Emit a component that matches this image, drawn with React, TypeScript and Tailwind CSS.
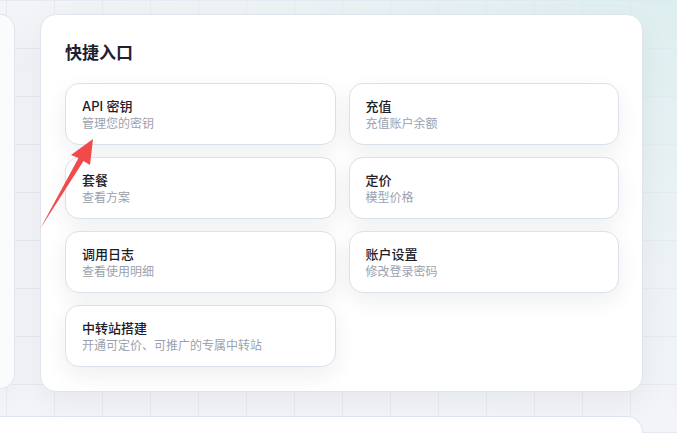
const items = [
  { title: 'API 密钥', desc: '管理您的密钥' },
  { title: '充值', desc: '充值账户余额' },
  { title: '套餐', desc: '查看方案' },
  { title: '定价', desc: '模型价格' },
  { title: '调用日志', desc: '查看使用明细' },
  { title: '账户设置', desc: '修改登录密码' },
  { title: '中转站搭建', desc: '开通可定价、可推广的专属中转站' },
];

export default function App() {
  return (
    <div className="relative h-[433px] w-[677px] overflow-hidden bg-[#f2f4f7] font-['Inter','Noto_Sans_CJK_SC',sans-serif]">
      {/* grid background */}
      <div className="absolute inset-0 bg-[linear-gradient(to_right,#e6e9f0_1px,transparent_1px),linear-gradient(to_bottom,#e6e9f0_1px,transparent_1px)] bg-[size:48px_48px] bg-[position:6px_0px]" />
      <div className="absolute inset-0 bg-[radial-gradient(ellipse_at_top_right,rgba(214,236,236,0.75),rgba(230,240,242,0.35)_45%,transparent_70%)]" />

      <div className="relative pt-[14px]">
        <div className="flex items-start gap-[25px]">
          {/* left panel (cut off) */}
          <div className="h-[375px] w-[15px] rounded-r-2xl border-y border-r border-[#dfe5ee] bg-[#fafbfc] shadow-[0_10px_30px_rgba(15,23,42,0.05)]" />

          {/* main card */}
          <div className="w-[603px] rounded-2xl border border-[#dfe5ee] bg-white pb-[24px] pl-[24px] pr-[23px] pt-[26px] shadow-[0_10px_30px_rgba(15,23,42,0.05)]">
            <h2 className="mb-[18px] text-[17px] font-bold leading-6 text-[#1c2230]">快捷入口</h2>
            <div className="grid grid-cols-2 gap-x-[13px] gap-y-[12px]">
              {items.map((item) => (
                <div
                  key={item.title}
                  className="h-[62px] rounded-[14px] border border-[#dae1ec] bg-white px-[16px] pt-[13px] shadow-[0_8px_22px_rgba(15,23,42,0.07)]"
                >
                  <p className="text-[13px] font-medium leading-[18px] text-[#1c2029]">{item.title}</p>
                  <p className="text-[12px] leading-[17px] text-[#9ba2ae]">{item.desc}</p>
                </div>
              ))}
            </div>
          </div>
        </div>

        {/* bottom card (cut off) */}
        <div className="mt-[24px] h-[40px] w-[643px] rounded-tr-2xl border-r border-t border-[#dfe5ee] bg-white" />
      </div>

      {/* red annotation arrow */}
      <svg className="pointer-events-none absolute left-0 top-0" width="677" height="433" viewBox="0 0 677 433">
        <polygon
          points="93,139 71,155 78.5,158 40,229 83.5,161 90,165"
          fill="#f04a4a"
        />
      </svg>
    </div>
  );
}
